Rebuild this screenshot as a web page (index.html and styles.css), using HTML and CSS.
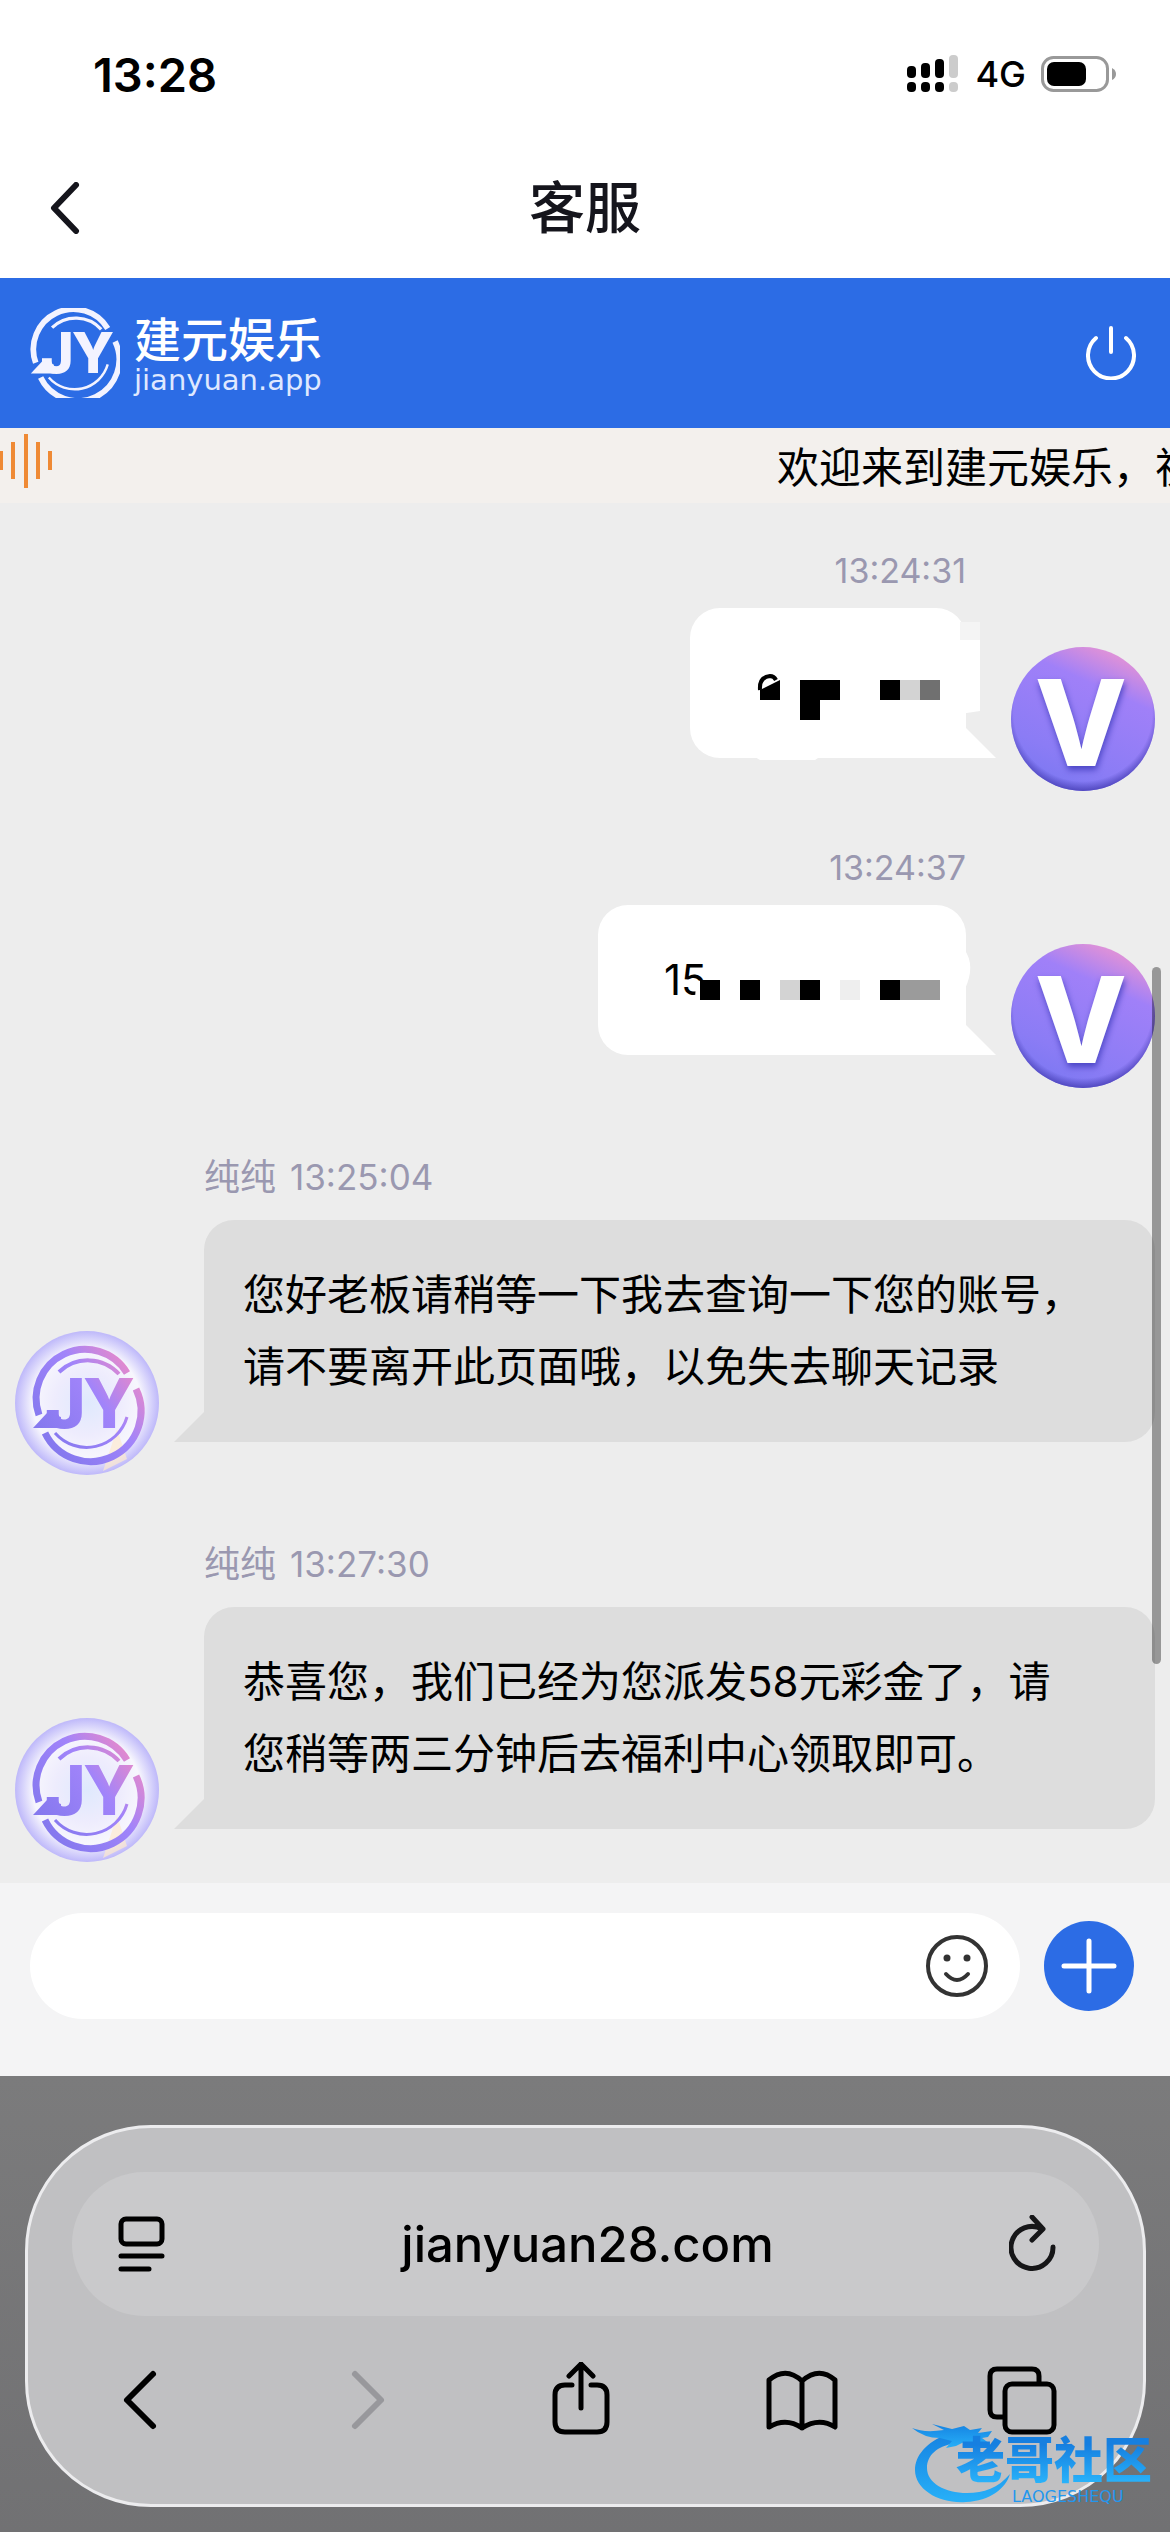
FILE: index.html
```html
<!DOCTYPE html>
<html lang="zh-CN">
<head>
    <meta charset="UTF-8">
    <meta name="viewport" content="width=device-width, initial-scale=1.0">
    <title>客服</title>
    <link rel="stylesheet" href="styles.css">
</head>
<body>
    <svg class="defs" aria-hidden="true">
        <defs>
            <linearGradient id="jyfill" gradientUnits="userSpaceOnUse" x1="25" y1="105" x2="118" y2="35">
                <stop offset="0" stop-color="#8478ee"/>
                <stop offset="0.6" stop-color="#a184fa"/>
                <stop offset="1" stop-color="#e889ca"/>
            </linearGradient>
            <radialGradient id="pearl">
                <stop offset="0" stop-color="#dfe9fd"/>
                <stop offset="0.45" stop-color="#eeecfd"/>
                <stop offset="0.75" stop-color="#f7f6fd"/>
                <stop offset="1" stop-color="#beb8fa"/>
            </radialGradient>
            <linearGradient id="violet" x1="0.85" y1="0" x2="0.4" y2="1">
                <stop offset="0" stop-color="#ef9bd2"/>
                <stop offset="0.12" stop-color="#d78fdc"/>
                <stop offset="0.32" stop-color="#a080f8"/>
                <stop offset="0.8" stop-color="#8b7cf5"/>
                <stop offset="1" stop-color="#7d78f2"/>
            </linearGradient>
            <radialGradient id="rim" cx="0.5" cy="0.45" r="0.56">
                <stop offset="0.86" stop-color="#4a41b8" stop-opacity="0"/>
                <stop offset="1" stop-color="#4a41b8"/>
            </radialGradient>
            <linearGradient id="dragon" x1="0" y1="0" x2="0" y2="1">
                <stop offset="0" stop-color="#1683e2"/>
                <stop offset="1" stop-color="#27b0f8"/>
            </linearGradient>
        </defs>
        <symbol id="ring" viewBox="0 0 144 144">
            <g fill="none">
                <path d="M24 84A49 49 0 0 1 112 42" stroke-width="7"/>
                <path d="M44 41A42 42 0 0 1 104 43" stroke-width="4"/>
                <path d="M121 58A50 50 0 0 1 30 102" stroke-width="7"/>
                <path d="M112 86A42 42 0 0 1 40 102" stroke-width="3"/>
            </g>
            <path d="M18 97L32 82L46 86V97Z" stroke="none"/>
        </symbol>
        <symbol id="vip" viewBox="0 0 144 144">
            <circle cx="72" cy="72" r="72" fill="url(#violet)"/>
            <circle cx="72" cy="72" r="72" fill="url(#rim)"/>
        </symbol>
        <symbol id="agent" viewBox="0 0 144 144">
            <circle cx="72" cy="72" r="72" fill="url(#pearl)"/>
            <path d="M88 140L102 98L112 128Z" fill="#fde9cf" opacity="0.7"/>
            <use href="#ring" fill="url(#jyfill)" stroke="url(#jyfill)"/>
        </symbol>
    </svg>

    <div class="status">
        <span class="clock">13:28</span>
        <div class="signals">
            <svg width="54" height="38" viewBox="0 0 54 38">
                <g fill="#000">
                    <rect x="1" y="11" width="9" height="12" rx="4"/>
                    <rect x="15" y="8" width="9" height="15" rx="4"/>
                    <rect x="29" y="4" width="9" height="19" rx="4"/>
                    <rect x="1" y="27" width="9" height="10" rx="4"/>
                    <rect x="15" y="27" width="9" height="10" rx="4"/>
                    <rect x="29" y="27" width="9" height="10" rx="4"/>
                </g>
                <g fill="#ccc">
                    <rect x="43" y="0" width="9" height="23" rx="4"/>
                    <rect x="43" y="27" width="9" height="10" rx="4"/>
                </g>
            </svg>
            <span class="network">4G</span>
            <svg width="76" height="36" viewBox="0 0 76 36">
                <rect x="1.5" y="1.5" width="65" height="33" rx="11" fill="none" stroke="#999" stroke-width="3"/>
                <rect x="6" y="6" width="39" height="24" rx="7"/>
                <path d="M71 12Q75 14 75 18T71 24Z" fill="#999"/>
            </svg>
        </div>
    </div>

    <header class="titlebar">
        <button class="icon-btn" aria-label="返回">
            <svg width="30" height="52" viewBox="0 0 30 52"><path d="M26 3L4 26L26 49" fill="none" stroke="#15151c" stroke-width="6" stroke-linecap="round" stroke-linejoin="round"/></svg>
        </button>
        <h1>客服</h1>
    </header>

    <div class="brandbar">
        <div class="brand">
            <svg class="brand-mark" viewBox="17 17 110 110" fill="#f3f3ff">
                <use href="#ring" width="144" height="144" stroke="#f3f3ff"/>
                <text class="jy-text" x="30 68" y="97">JY</text>
            </svg>
            <div class="brand-text">
                <div class="brand-name">建元娱乐</div>
                <div class="brand-url">jianyuan.app</div>
            </div>
        </div>
        <button class="icon-btn" aria-label="退出">
            <svg width="50" height="54" viewBox="0 0 50 54" fill="none" stroke="#fff" stroke-width="4" stroke-linecap="round"><path d="M25 2V26M10 12A23 23 0 1 0 40 12"/></svg>
        </button>
    </div>

    <div class="notice">
        <svg width="52" height="54" viewBox="0 0 52 54" stroke="#ef8a35" stroke-width="4"><path d="M1 17V36M13 8V45M26 0V54M38 8V45M50 17V36"/></svg>
        <span>欢迎来到建元娱乐，祝您</span>
    </div>

    <main class="chat">
        <div class="message sent">
            <div class="content">
                <div class="meta"><time>13:24:31</time></div>
                <div class="bubble masked">
                    <svg class="mosaic" width="276" height="150" viewBox="0 0 276 150">
                        <path fill="#fff" d="M270 32H290V103L270 106ZM60 146H134L125 152H70Z"/>
                        <path fill="#f4f4f4" d="M270 14H290V32H270Z"/>
                        <path fill="none" stroke="#000" stroke-width="4" d="M70 82Q69 69 80 68Q84 68 86 72"/>
                        <path d="M70 82L90 72V92H70ZM110 72H150V92H130V112H110ZM190 72H210V92H190Z"/>
                        <path fill="#d3d3d3" d="M210 72H230V92H210Z"/>
                        <path fill="#707070" d="M230 72H250V92H230Z"/>
                    </svg>
                </div>
            </div>
            <svg class="avatar" viewBox="0 0 144 144">
                <use href="#vip"/>
                <text class="vip-text" x="70" y="119" text-anchor="middle">V</text>
            </svg>
        </div>

        <div class="message sent">
            <div class="content">
                <div class="meta"><time>13:24:37</time></div>
                <div class="bubble phone">15
                    <svg class="mosaic" width="368" height="150" viewBox="0 0 368 150">
                        <path fill="#fff" d="M366 44Q378 60 367 84ZM98 76L112 75V95H97Z"/>
                        <path d="M102 75H122V95H102ZM142 75H162V95H142ZM202 75H222V95H202ZM282 75H302V95H282Z"/>
                        <path fill="#d3d3d3" d="M182 75H202V95H182Z"/>
                        <path fill="#eee" d="M242 75H262V95H242Z"/>
                        <path fill="#9b9b9b" d="M302 75H342V95H302Z"/>
                    </svg>
                </div>
            </div>
            <svg class="avatar" viewBox="0 0 144 144">
                <use href="#vip"/>
                <text class="vip-text" x="70" y="119" text-anchor="middle">V</text>
            </svg>
        </div>

        <div class="message received">
            <svg class="avatar" viewBox="0 0 144 144">
                <use href="#agent"/>
                <text class="jy-text" x="30 68" y="97" fill="url(#jyfill)">JY</text>
            </svg>
            <div class="content">
                <div class="meta"><span>纯纯</span><time>13:25:04</time></div>
                <div class="bubble">您好老板请稍等一下我去查询一下您的账号，<br>请不要离开此页面哦，以免失去聊天记录</div>
            </div>
        </div>

        <div class="message received">
            <svg class="avatar" viewBox="0 0 144 144">
                <use href="#agent"/>
                <text class="jy-text" x="30 68" y="97" fill="url(#jyfill)">JY</text>
            </svg>
            <div class="content">
                <div class="meta"><span>纯纯</span><time>13:27:30</time></div>
                <div class="bubble">恭喜您，我们已经为您派发58元彩金了，请<br>您稍等两三分钟后去福利中心领取即可。</div>
            </div>
        </div>
        <div class="scrollbar"></div>
    </main>

    <form class="composer">
        <div class="field">
            <input type="text" aria-label="输入消息">
            <button type="button" class="icon-btn" aria-label="表情">
                <svg width="64" height="64" viewBox="0 0 64 64">
                    <circle cx="32" cy="32" r="29" fill="none" stroke="#333" stroke-width="4"/>
                    <circle cx="22" cy="24" r="3.5" fill="#333"/>
                    <circle cx="42" cy="24" r="3.5" fill="#333"/>
                    <path d="M21 40Q32 52 43 40" fill="none" stroke="#333" stroke-width="4" stroke-linecap="round"/>
                </svg>
            </button>
        </div>
        <button type="button" class="plus" aria-label="更多">
            <svg width="56" height="56" viewBox="0 0 56 56"><path d="M28 3V53M3 28H53" stroke="#fff" stroke-width="5" stroke-linecap="round"/></svg>
        </button>
    </form>

    <footer class="browser">
        <div class="panel">
            <div class="address">
                <button class="icon-btn" aria-label="页面菜单">
                    <svg width="48" height="56" viewBox="0 0 48 56" fill="none" stroke="#000" stroke-width="5" stroke-linecap="round"><rect x="3" y="3" width="41" height="25" rx="5"/><path d="M3 40H44M3 53H31"/></svg>
                </button>
                <input type="text" value="jianyuan28.com" aria-label="网址">
                <button class="icon-btn" aria-label="刷新">
                    <svg width="48" height="58" viewBox="0 0 48 58" fill="none" stroke="#161618" stroke-width="5" stroke-linecap="round" stroke-linejoin="round"><path d="M44 32A21 21 0 1 1 33 14M23 2L34 14L23 25"/></svg>
                </button>
            </div>
            <nav class="toolbar">
                <button class="icon-btn" aria-label="后退">
                    <svg width="72" height="76" viewBox="0 0 72 76"><path d="M49 12L23 38L49 64" fill="none" stroke="#000" stroke-width="6" stroke-linecap="round" stroke-linejoin="round"/></svg>
                </button>
                <button class="icon-btn" aria-label="前进" disabled>
                    <svg width="72" height="76" viewBox="0 0 72 76"><path d="M30 12L56 38L30 64" fill="none" stroke="#98989c" stroke-width="6" stroke-linecap="round" stroke-linejoin="round"/></svg>
                </button>
                <button class="icon-btn" aria-label="分享">
                    <svg width="72" height="76" viewBox="0 0 72 76" fill="none" stroke="#000" stroke-width="5" stroke-linecap="round" stroke-linejoin="round"><path d="M27 23H20Q10 23 10 33V60Q10 70 20 70H52Q62 70 62 60V33Q62 23 52 23H46M36 46V2M24 14L36 2L48 14"/></svg>
                </button>
                <button class="icon-btn" aria-label="书签">
                    <svg width="72" height="76" viewBox="0 0 72 76" fill="none" stroke="#000" stroke-width="5" stroke-linecap="round" stroke-linejoin="round"><path d="M36 19Q20 4 3 18V65Q20 55 36 66Q53 55 69 65V18Q53 4 36 19ZM36 19V66"/></svg>
                </button>
                <button class="icon-btn" aria-label="标签页">
                    <svg width="72" height="76" viewBox="0 0 72 76" fill="none" stroke="#000" stroke-width="5"><rect x="19" y="22" width="49" height="48" rx="7"/><path d="M53 22V14Q53 7 46 7H11Q4 7 4 14V48Q4 55 11 55H19"/></svg>
                </button>
            </nav>
        </div>
        <div class="watermark">
            <svg width="104" height="82" viewBox="0 0 104 82" fill="url(#dragon)">
                <path d="M36 10C14 18 3 32 3 46C3 66 28 80 54 78C78 77 94 64 98 50C86 64 72 69 55 69C33 69 15 59 15 44C15 32 24 22 44 19Z"/>
                <path d="M0 4Q12 9 32 6L20 0L40 5L52 2L58 6L70 4L66 9L80 7L76 13L70 14L78 20L64 17L58 24L52 18L44 22L34 24L40 17L28 14Q12 14 0 4Z"/>
            </svg>
            <div class="watermark-text">
                <div class="watermark-name">老哥社区</div>
                <div class="watermark-sub">LAOGESHEQU</div>
            </div>
        </div>
    </footer>
</body>
</html>
```
FILE: styles.css
```css
* {
    box-sizing: border-box;
}
body {
    margin: 0;
    min-height: 100vh;
    display: flex;
    flex-direction: column;
    font-family: Inter, "Noto Sans CJK SC", sans-serif;
    font-size: 42px;
    color: #000;
    background: #fff;
}
svg {
    display: block;
    flex: none;
}
.defs {
    position: absolute;
    width: 0;
    height: 0;
}
.icon-btn {
    padding: 0;
    border: 0;
    background: none;
}
input {
    min-width: 0;
    flex: 1;
    border: 0;
    outline: none;
    background: none;
    font: inherit;
    color: inherit;
}

/* status bar */
.status {
    display: flex;
    justify-content: space-between;
    align-items: center;
    height: 148px;
    padding: 0 53px 0 93px;
}
.clock {
    font-size: 47px;
    font-weight: 600;
}
.signals {
    display: flex;
    align-items: center;
    gap: 15px;
}
.network {
    font-size: 36px;
    font-weight: 500;
}

/* page title */
.titlebar {
    display: grid;
    grid-template-columns: 1fr auto 1fr;
    align-items: center;
    height: 130px;
    padding: 0 50px 10px;
}
.titlebar .icon-btn {
    justify-self: start;
}
h1 {
    margin: 0;
    font-size: 56px;
    font-weight: 500;
    line-height: 80px;
    color: #15151c;
}

.brandbar {
    display: flex;
    justify-content: space-between;
    align-items: center;
    height: 150px;
    padding: 0 34px 0 30px;
    background: #2c6ce5;
    color: #fff;
}
.brand {
    display: flex;
    align-items: center;
    gap: 14px;
}
.brand-mark {
    width: 90px;
    height: 90px;
}
.brand-text {
    padding-top: 4px;
}
.brand-name {
    font-size: 47px;
    font-weight: 500;
    line-height: 50px;
}
.brand-url {
    font: 29px/30px "DejaVu Sans", sans-serif;
    color: #dfe8ff;
}
.jy-text {
    font: 800 69px Inter, sans-serif;
}
.vip-text {
    font: 800 120px Inter, sans-serif;
    fill: #fff;
    filter: drop-shadow(1px 4px 3px #4a45c4);
}

.notice {
    display: flex;
    gap: 725px;
    height: 75px;
    padding-top: 6px;
    overflow: hidden;
    white-space: nowrap;
    line-height: 68px;
    background: #f3f0ed;
}

/* conversation */
.chat {
    position: relative;
    flex: 1;
    display: flex;
    flex-direction: column;
    padding: 47px 15px 21px;
    background: #ededed;
}
.message {
    display: flex;
    align-items: flex-end;
    gap: 45px;
}
.avatar {
    width: 144px;
    height: 144px;
}
.content {
    padding-bottom: 33px;
}
.meta {
    display: flex;
    align-items: baseline;
    gap: 14px;
    height: 42px;
    margin-bottom: 16px;
    font-size: 36px;
    line-height: 42px;
    color: #9a98b0;
}
.meta time {
    font-size: 34px;
}
.received .meta time {
    font-size: 35px;
}
.bubble {
    position: relative;
    min-height: 150px;
    padding: 39px;
    border-radius: 30px;
    line-height: 72px;
}
.bubble::after {
    content: "";
    position: absolute;
    bottom: 0;
    width: 30px;
    height: 30px;
    background: inherit;
}
.sent {
    justify-content: flex-end;
}
.sent + .sent {
    margin-top: 56px;
}
.sent .meta {
    justify-content: flex-end;
}
.sent .bubble {
    background: #fff;
    border-bottom-right-radius: 0;
}
.sent .bubble::after {
    left: 100%;
    clip-path: polygon(0 0, 100% 100%, 0 100%);
}
.received {
    margin-top: 68px;
}
.received .content {
    flex: 1;
}
.received .meta {
    margin-bottom: 22px;
}
.received .bubble {
    background: #ddd;
    border-bottom-left-radius: 0;
}
.received .bubble::after {
    right: 100%;
    clip-path: polygon(100% 0, 100% 100%, 0 100%);
}
.masked {
    width: 276px;
}
.phone {
    width: 368px;
}
.sent .phone {
    padding-left: 66px;
}
.mosaic {
    position: absolute;
    top: 0;
    left: 0;
    overflow: visible;
}
.scrollbar {
    position: absolute;
    top: 464px;
    right: 9px;
    width: 9px;
    height: 697px;
    border-radius: 5px;
    background: rgba(0, 0, 0, 0.36);
}

/* message box */
.composer {
    display: flex;
    align-items: center;
    gap: 24px;
    height: 193px;
    padding: 0 36px 28px 30px;
    background: #f4f4f5;
}
.field {
    flex: 1;
    display: flex;
    align-items: center;
    height: 106px;
    padding: 0 31px 0 40px;
    border-radius: 53px;
    background: #fff;
}
.plus {
    display: flex;
    align-items: center;
    justify-content: center;
    width: 90px;
    height: 90px;
    padding: 0;
    border: 0;
    border-radius: 50%;
    background: #2c6ce5;
}

/* browser controls */
.browser {
    position: relative;
    padding: 49px 24px 25px 25px;
    background: linear-gradient(#7b7b7c, #717173);
}
.panel {
    height: 382px;
    padding: 44px;
    border: 3px solid #ececee;
    border-radius: 126px;
    background: #c0c0c2;
}
.address {
    display: flex;
    align-items: center;
    height: 144px;
    padding: 0 42px 0 46px;
    border-radius: 72px;
    background: #c9c9cb;
}
.address input {
    text-align: center;
    font-size: 49px;
    font-weight: 500;
}
.toolbar {
    display: flex;
    justify-content: space-between;
    padding: 46px 41px 0 32px;
}
.watermark {
    position: absolute;
    right: 18px;
    bottom: 26px;
    display: flex;
    align-items: flex-end;
}
.watermark svg {
    margin-right: -60px;
}
.watermark-text {
    position: relative;
    color: #2397ee;
}
.watermark-name {
    font-size: 49px;
    font-weight: 900;
    line-height: 54px;
    color: transparent;
    background: linear-gradient(#167fe0 20%, #29b2fa 90%);
    background-clip: text;
    -webkit-background-clip: text;
}
.watermark-sub {
    padding-left: 56px;
    font: 16px/18px "DejaVu Sans", sans-serif;
}
```
